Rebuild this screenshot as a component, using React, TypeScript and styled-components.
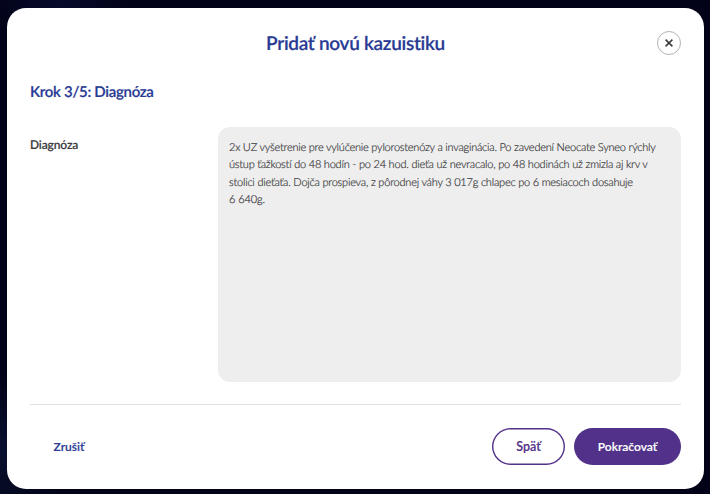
import React from "react";
import styled, { createGlobalStyle } from "styled-components";

const GlobalStyle = createGlobalStyle`
  * { box-sizing: border-box; }
  html, body, #root { height: 100%; }
  body {
    margin: 0;
    overflow: hidden;
    font-family: Lato, sans-serif;
    font-variant-ligatures: none;
    -webkit-font-smoothing: antialiased;
    text-rendering: geometricPrecision;
  }
  button { font-family: inherit; cursor: pointer; font-variant-ligatures: none; }
`;

const Backdrop = styled.main`
  height: 494px;
  width: 710px;
  padding: 8px 6px 5px 7px;
  background:
    radial-gradient(circle at 0 450px, #09102f 0, transparent 75px),
    radial-gradient(ellipse at 60px 0, #070b2c 0, transparent 70px),
    #020318;
`;

const Dialog = styled.section`
  height: 481px;
  padding: 0 23px;
  border-radius: 19px;
  background: #fff;
  display: flex;
  flex-direction: column;
`;

const Header = styled.header`
  height: 70px;
  flex: none;
  display: grid;
  grid-template-columns: 24px 1fr 24px;
  align-items: center;
`;

const Title = styled.h1`
  grid-column: 2;
  margin: 0;
  padding-top: 2px;
  text-align: center;
  font-size: 19px;
  line-height: 24px;
  font-weight: 600;
  letter-spacing: -0.3px;
  -webkit-text-stroke: 0.2px;
  color: #283a94;
`;

const CloseButton = styled.button`
  width: 24px;
  height: 24px;
  padding: 0;
  border: 1px solid #b3b3b3;
  border-radius: 50%;
  background: #fff;
  display: grid;
  place-items: center;
`;

const Step = styled.h2`
  margin: 4px 0 0;
  height: 20px;
  font-size: 15px;
  line-height: 20px;
  font-weight: 600;
  letter-spacing: -0.3px;
  -webkit-text-stroke: 0.2px;
  color: #283a94;
`;

const Field = styled.div`
  margin-top: 24px;
  display: grid;
  grid-template-columns: 187px minmax(0, 1fr);
`;

const Label = styled.div`
  padding-top: 10.5px;
  font-size: 12px;
  line-height: 16px;
  font-weight: 600;
  letter-spacing: -0.15px;
  -webkit-text-stroke: 0.15px;
  color: #3b3b3d;
`;

const TextBox = styled.div`
  height: 255px;
  margin: 0.5px 0 0.5px 0.5px;
  padding: 12px 11.5px;
  border-radius: 12px;
  background: #eee;
  color: #3a3a3c;
`;

const Line = styled.div<{ $spacing: number }>`
  font-size: 11px;
  line-height: 17.5px;
  font-weight: 300;
  white-space: nowrap;
  width: max-content;
  -webkit-text-stroke: 0.2px;
  letter-spacing: ${(p) => p.$spacing}px;
`;

const Footer = styled.footer`
  margin-top: 22px;
  padding-top: 23px;
  border-top: 1px solid #e0e0e0;
  display: flex;
  align-items: center;
  gap: 9px;
`;

const Button = styled.button<{ $kind: "link" | "outline" | "solid"; $width: number }>`
  width: ${(p) => p.$width}px;
  height: 37px;
  padding: 0;
  border-radius: 19px;
  border: 0;
  box-shadow: ${(p) => (p.$kind === "outline" ? "inset 0 0 0 1.4px #51318a" : "none")};
  background: ${(p) => (p.$kind === "solid" ? "#51318a" : "transparent")};
  color: ${(p) => ({ link: "#283a94", outline: "#51318a", solid: "#fff" })[p.$kind]};
  margin-right: ${(p) => (p.$kind === "link" ? "auto" : "0")};
  font-size: ${(p) => (p.$kind === "outline" ? 12.5 : 12)}px;
  font-weight: 600;
  -webkit-text-stroke: 0.15px;
`;

const lines = [
  { text: "2x UZ vyšetrenie pre vylúčenie pylorostenózy a invaginácia. Po zavedení Neocate Syneo rýchly", spacing: -0.218 },
  { text: "ústup ťažkostí do 48 hodín - po 24 hod. dieťa už nevracalo, po 48 hodinách už zmizla aj krv v", spacing: -0.21 },
  { text: "stolici dieťaťa. Dojča prospieva, z pôrodnej váhy 3 017g chlapec po 6 mesiacoch dosahuje", spacing: -0.21 },
  { text: "6 640g.", spacing: -0.1 },
];

export default function App() {
  return (
    <>
      <GlobalStyle />
      <Backdrop>
        <Dialog>
          <Header>
            <Title>Pridať novú kazuistiku</Title>
            <CloseButton aria-label="Zavrieť">
              <svg width="8" height="8" viewBox="0 0 8 8" stroke="#3b3b3d" strokeWidth="1.5">
                <path d="M.6.6 7.4 7.4M7.4.6.6 7.4" />
              </svg>
            </CloseButton>
          </Header>
          <Step>Krok 3/5: Diagnóza</Step>
          <Field>
            <Label>Diagnóza</Label>
            <TextBox>
              {lines.map((l) => (
                <Line key={l.text} $spacing={l.spacing}>{l.text}</Line>
              ))}
            </TextBox>
          </Field>
          <Footer>
            <Button $kind="link" $width={78}>Zrušiť</Button>
            <Button $kind="outline" $width={73}>Späť</Button>
            <Button $kind="solid" $width={107}>Pokračovať</Button>
          </Footer>
        </Dialog>
      </Backdrop>
    </>
  );
}
